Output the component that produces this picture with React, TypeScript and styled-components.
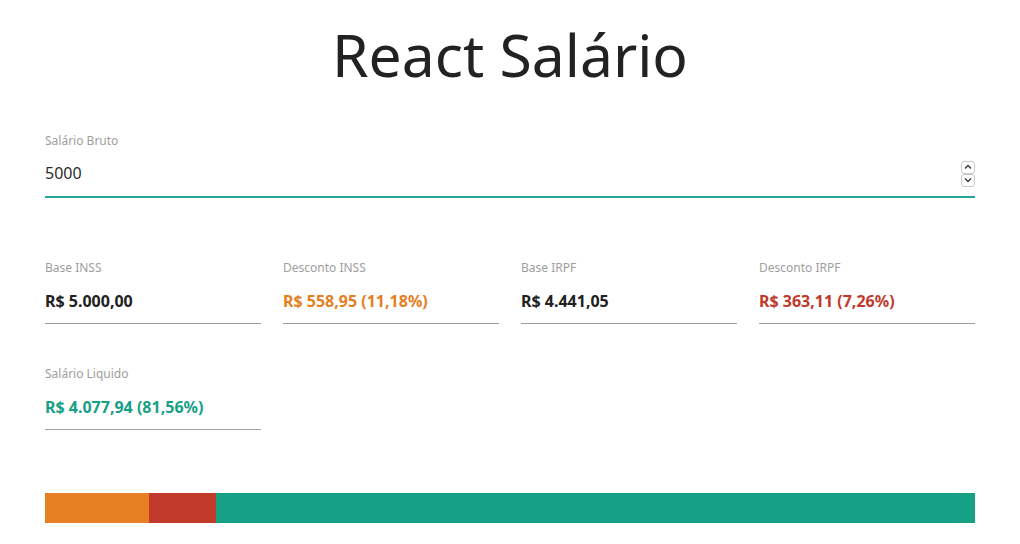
import React, { useState } from "react";
import styled, { createGlobalStyle } from "styled-components";

const Global = createGlobalStyle`
  html, body { margin: 0; padding: 0; background: #fff; }
  body { font-family: "Noto Sans", "Open Sans", sans-serif; color: rgba(0,0,0,0.87); }
  * { box-sizing: border-box; }
  input[type=number]::-webkit-inner-spin-button,
  input[type=number]::-webkit-outer-spin-button { -webkit-appearance: none; margin: 0; }
`;

const Container = styled.div`
  width: 930px;
  margin: 0 auto;
  padding-top: 22px;
  display: flex;
  flex-direction: column;
`;

const Title = styled.h1`
  margin: 0;
  font-weight: 400;
  font-size: 58.8px;
  line-height: 65px;
  text-align: center;
  color: #222;
`;

const InputField = styled.div`
  margin-top: 47px;
  display: flex;
  flex-direction: column;
`;

const Label = styled.label`
  font-size: 12px;
  line-height: 14px;
  color: #9e9e9e;
`;

const InputRow = styled.div`
  margin-top: 4px;
  height: 45px;
  display: flex;
  align-items: center;
  border-bottom: 1px solid #26a69a;
  box-shadow: 0 1px 0 0 #26a69a;
  padding-bottom: 2px;
`;

const NumberInput = styled.input`
  flex: 1;
  height: 100%;
  border: none;
  outline: none;
  padding: 0;
  font-family: inherit;
  font-size: 16px;
  color: rgba(0,0,0,0.87);
  background: transparent;
  caret-color: #000;
  -moz-appearance: textfield;
`;

const Spinner = styled.div`
  display: flex;
  flex-direction: column;
  width: 14px;
  margin-top: 1px;
`;

const SpinButton = styled.div`
  height: 13px;
  border: 1px solid #c8c8c8;
  border-radius: 3px;
  display: flex;
  align-items: center;
  justify-content: center;
  background: #fff;
`;

const Grid = styled.div`
  margin-top: 64px;
  display: grid;
  grid-template-columns: repeat(4, 216px);
  column-gap: 22px;
  row-gap: 43px;
`;

const Field = styled.div`
  display: flex;
  flex-direction: column;
`;

const Value = styled.div<{ $color: string }>`
  margin-top: 4px;
  height: 45px;
  line-height: 44px;
  border-bottom: 1px solid #9e9e9e;
  font-size: 16px;
  font-weight: 700;
  color: ${(p) => p.$color};
`;

const Bar = styled.div`
  margin-top: 63px;
  height: 30px;
  display: flex;
`;

const Segment = styled.div<{ $color: string }>`
  height: 100%;
  background: ${(p) => p.$color};
`;

const fields = [
  { label: "Base INSS", value: "R$ 5.000,00", color: "#212121" },
  { label: "Desconto INSS", value: "R$ 558,95 (11,18%)", color: "#e67e22" },
  { label: "Base IRPF", value: "R$ 4.441,05", color: "#212121" },
  { label: "Desconto IRPF", value: "R$ 363,11 (7,26%)", color: "#c0392b" },
  { label: "Salário Liquido", value: "R$ 4.077,94 (81,56%)", color: "#16a085" },
];

const Chevron = ({ up }: { up?: boolean }) => (
  <svg width="8" height="6" viewBox="0 0 8 6">
    <path
      d={up ? "M1 4.5 L4 1.5 L7 4.5" : "M1 1.5 L4 4.5 L7 1.5"}
      fill="none"
      stroke="#333"
      strokeWidth="1.3"
    />
  </svg>
);

export default function App() {
  const [salary, setSalary] = useState("5000");
  return (
    <>
      <Global />
      <Container>
        <Title>React Salário</Title>
        <InputField>
          <Label htmlFor="salary">Salário Bruto</Label>
          <InputRow>
            <NumberInput
              id="salary"
              type="number"
              autoFocus
              value={salary}
              onChange={(e) => setSalary(e.target.value)}
            />
            <Spinner>
              <SpinButton>
                <Chevron up />
              </SpinButton>
              <SpinButton>
                <Chevron />
              </SpinButton>
            </Spinner>
          </InputRow>
        </InputField>
        <Grid>
          {fields.map((f) => (
            <Field key={f.label}>
              <Label>{f.label}</Label>
              <Value $color={f.color}>{f.value}</Value>
            </Field>
          ))}
        </Grid>
        <Bar>
          <Segment $color="#e67e22" style={{ width: "11.18%" }} />
          <Segment $color="#c0392b" style={{ width: "7.26%" }} />
          <Segment $color="#16a085" style={{ width: "81.56%" }} />
        </Bar>
      </Container>
    </>
  );
}
